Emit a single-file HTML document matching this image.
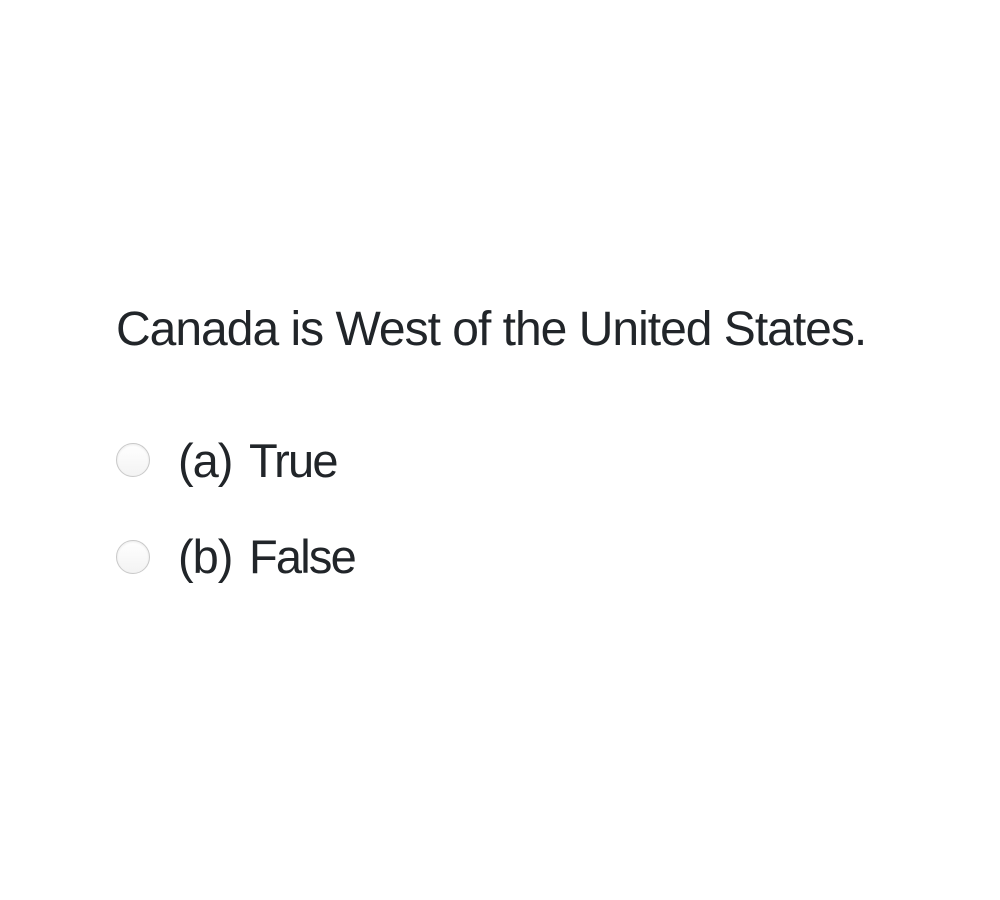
<!DOCTYPE html>
<html><head><meta charset="utf-8"><style>
html,body{margin:0;padding:0;background:#fff;width:1000px;height:900px;overflow:hidden}
body{font-family:"Liberation Sans",Arial,sans-serif;color:#212529}
.q{position:absolute;left:116px;top:298px;font-size:48px;line-height:64px;white-space:nowrap;letter-spacing:-1px}
.opt{position:absolute;left:116px;font-size:47px;line-height:60px;white-space:nowrap;letter-spacing:-1px}
.r{position:absolute;left:0;width:32px;height:32px;border:1px solid #c9c9c9;border-radius:50%;background:linear-gradient(#fff,#f3f3f3);box-shadow:inset 0 1px 2px rgba(0,0,0,.08)}
.t{position:absolute;left:62px;top:0}
.w{position:absolute;left:133px;top:0;letter-spacing:-1.8px}
</style></head><body>
<div class="q">Canada is West of the United States.</div>
<div class="opt" style="top:431px"><div class="r" style="top:12px"></div><div class="t">(a)</div><div class="w">True</div></div>
<div class="opt" style="top:527px"><div class="r" style="top:13px"></div><div class="t">(b)</div><div class="w">False</div></div>
</body></html>
